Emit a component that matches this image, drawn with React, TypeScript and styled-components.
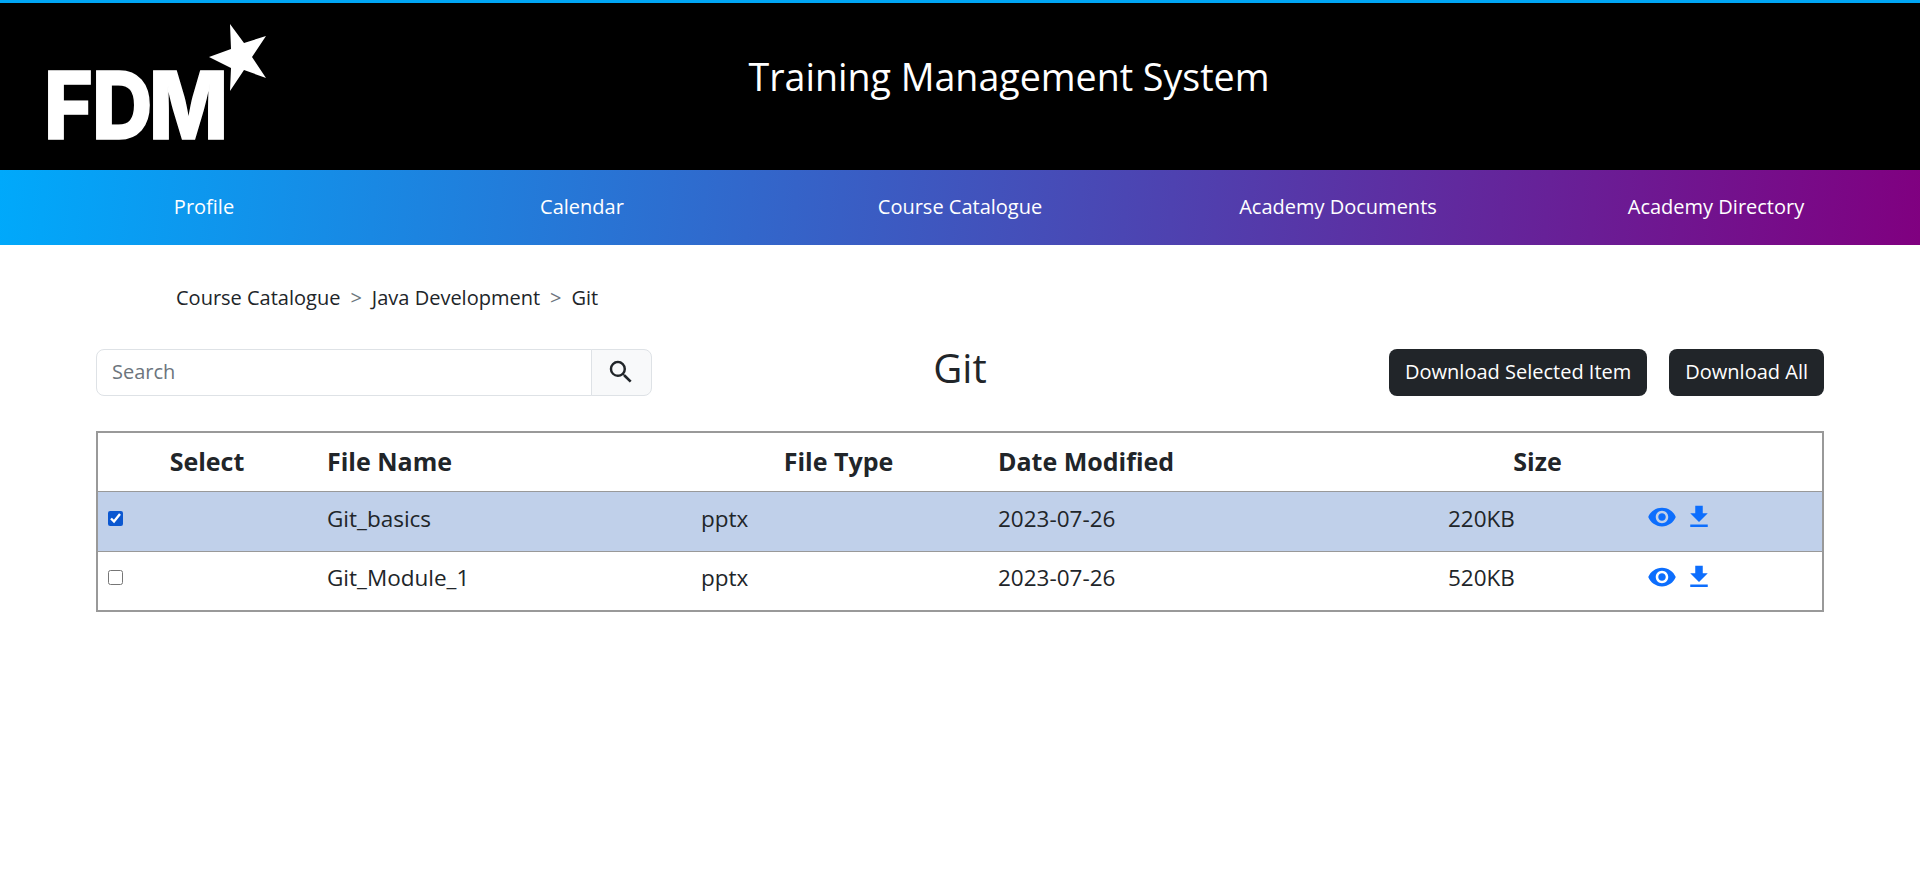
import React from "react";
import styled, { createGlobalStyle } from "styled-components";
import { MdVisibility, MdFileDownload, MdSearch } from "react-icons/md";

const Global = createGlobalStyle`
  html, body { margin: 0; padding: 0; background: #fff; }
  body { font-family: "Open Sans", "Noto Sans", sans-serif; color: #212529; }
`;

const Page = styled.div`
  min-height: 878px;
  border-top: 3px solid #00a6f5;
  box-sizing: border-box;
`;

const Header = styled.header`
  display: grid;
  grid-template-columns: 300px 1fr 202px;
  height: 167px;
  background: #000;
`;

const LogoBox = styled.div`
  padding: 21px 0 0 40px;
`;

const Title = styled.h1`
  margin: 0;
  padding-top: 50px;
  text-align: center;
  font-size: 37.6px;
  line-height: 48px;
  font-weight: 400;
  color: #fff;
`;

const Nav = styled.nav`
  display: grid;
  grid-template-columns: repeat(5, 1fr);
  height: 75px;
  padding: 0 15px;
  background: linear-gradient(95deg, #00a9fb 0%, #800080 100%);
`;

const NavLink = styled.a`
  display: flex;
  align-items: center;
  justify-content: center;
  padding-bottom: 2px;
  color: #fff;
  font-size: 20px;
`;

const Main = styled.main`
  padding: 0 96px;
`;

const Crumbs = styled.div`
  display: flex;
  gap: 10px;
  padding: 40px 0 0 80px;
  height: 65px;
  box-sizing: border-box;
  font-size: 20px;
  line-height: 26px;
`;

const Sep = styled.span`
  color: #6c757d;
`;

const Toolbar = styled.div`
  display: grid;
  grid-template-columns: 1fr auto 1fr;
  align-items: flex-start;
  margin-top: 39px;
`;

const SearchGroup = styled.div`
  display: flex;
  width: 556px;
  height: 47px;
`;

const SearchInput = styled.input`
  flex: 1;
  min-width: 0;
  box-sizing: border-box;
  padding: 0 15px 2px;
  border: 1px solid #dee2e6;
  border-radius: 8px 0 0 8px;
  font: inherit;
  font-size: 20px;
  color: #212529;
  &::placeholder { color: #6c757d; }
`;

const SearchButton = styled.button`
  width: 61px;
  margin-left: -1px;
  display: flex;
  align-items: center;
  justify-content: center;
  border: 1px solid #dee2e6;
  border-radius: 0 8px 8px 0;
  background: #f8f9fa;
  color: #212529;
  padding: 0 2px 1px 0;
`;

const PageTitle = styled.h2`
  margin: 0;
  font-size: 40px;
  line-height: 38px;
  font-weight: 400;
`;

const Actions = styled.div`
  display: flex;
  justify-content: flex-end;
  gap: 22px;
`;

const DarkButton = styled.button`
  height: 47px;
  padding: 0 16px 2px;
  border: 0;
  border-radius: 8px;
  background: #212529;
  color: #fff;
  font: inherit;
  font-size: 20px;
`;

const Table = styled.table`
  width: 100%;
  margin-top: 35px;
  border-collapse: collapse;
  table-layout: fixed;
  border: 2px solid #999;
`;

const HeadCell = styled.th<{ $align?: string; $pl?: number; $pr?: number }>`
  height: 59px;
  padding: 0 ${(p) => p.$pr ?? 8}px 2px ${(p) => p.$pl ?? 9}px;
  box-sizing: border-box;
  text-align: ${(p) => p.$align || "left"};
  font-size: 25px;
  font-weight: 700;
`;

const Row = styled.tr<{ $selected?: boolean }>`
  background: ${(p) => (p.$selected ? "#c0d0ea" : "#fff")};
`;

const Cell = styled.td`
  height: 60px;
  padding: 0 8px 6px 9px;
  box-sizing: border-box;
  border-top: 1px solid #999;
  font-size: 22.5px;
  font-weight: 400;
  vertical-align: middle;
`;

const CheckCell = styled(Cell)`
  padding-left: 10px;
`;

const Check = styled.input`
  display: block;
  width: 15px;
  height: 15px;
  margin: 0;
  accent-color: #0b57d0;
`;

const Icons = styled.div`
  display: flex;
  align-items: center;
  gap: 7px;
  padding: 0 0 2px 5px;
  color: #0d6efd;
`;

const LogoText = styled.text`
  font-family: Inter, "Liberation Sans", sans-serif;
  font-weight: 800;
  font-size: 93px;
  fill: #fff;
  stroke: #fff;
  stroke-width: 1.5px;
`;

const Logo = () => (
  <svg width="230" height="145" viewBox="40 24 230 145" aria-label="FDM">
    <LogoText x="48.9 102.2 165.6" y="139" transform="scale(0.9 1)">FDM</LogoText>
    <polygon
      fill="#fff"
      points="230,24 244,43 266,36 252,57 266,78 244,70 230,91 231,68 209,57 231,49"
    />
  </svg>
);

const files = [
  { name: "Git_basics", type: "pptx", date: "2023-07-26", size: "220KB", selected: true },
  { name: "Git_Module_1", type: "pptx", date: "2023-07-26", size: "520KB", selected: false },
];

const navItems = ["Profile", "Calendar", "Course Catalogue", "Academy Documents", "Academy Directory"];

export default function App() {
  return (
    <Page>
      <Global />
      <Header>
        <LogoBox>
          <Logo />
        </LogoBox>
        <Title>Training Management System</Title>
        <div />
      </Header>
      <Nav>
        {navItems.map((n) => (
          <NavLink key={n}>{n}</NavLink>
        ))}
      </Nav>
      <Main>
        <Crumbs>
          <span>Course Catalogue</span>
          <Sep>&gt;</Sep>
          <span>Java Development</span>
          <Sep>&gt;</Sep>
          <span>Git</span>
        </Crumbs>
        <Toolbar>
          <SearchGroup>
            <SearchInput placeholder="Search" />
            <SearchButton>
              <MdSearch size={30} />
            </SearchButton>
          </SearchGroup>
          <PageTitle>Git</PageTitle>
          <Actions>
            <DarkButton>Download Selected Item</DarkButton>
            <DarkButton>Download All</DarkButton>
          </Actions>
        </Toolbar>
        <Table>
          <colgroup>
            <col style={{ width: 221 }} />
            <col style={{ width: 374 }} />
            <col style={{ width: 297 }} />
            <col style={{ width: 450 }} />
            <col style={{ width: 194 }} />
            <col />
          </colgroup>
          <thead>
            <tr>
              <HeadCell $align="center" $pr={11}>Select</HeadCell>
              <HeadCell>File Name</HeadCell>
              <HeadCell $align="center" $pr={13}>File Type</HeadCell>
              <HeadCell>Date Modified</HeadCell>
              <HeadCell $align="center" $pl={11}>Size</HeadCell>
              <HeadCell />
            </tr>
          </thead>
          <tbody>
            {files.map((f) => (
              <Row key={f.name} $selected={f.selected}>
                <CheckCell>
                  <Check type="checkbox" defaultChecked={f.selected} />
                </CheckCell>
                <Cell>{f.name}</Cell>
                <Cell>{f.type}</Cell>
                <Cell>{f.date}</Cell>
                <Cell>{f.size}</Cell>
                <Cell>
                  <Icons>
                    <MdVisibility size={30} />
                    <MdFileDownload size={30} />
                  </Icons>
                </Cell>
              </Row>
            ))}
          </tbody>
        </Table>
      </Main>
    </Page>
  );
}
